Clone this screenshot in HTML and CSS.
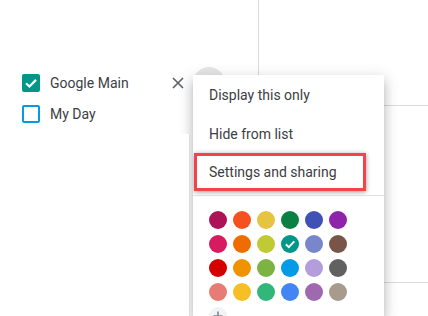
FILE: index.html
```html
<!DOCTYPE html>
<html>
<head>
<meta charset="utf-8">
<link rel="stylesheet" href="styles.css">
</head>
<body>
  <aside class="sidebar">
    <div class="cal-row">
      <span class="cb cb-checked">
        <svg width="18" height="18" viewBox="0 0 18 18"><polyline points="4,9.2 7.4,12.5 14,5.9" fill="none" stroke="#fff" stroke-width="2.2"/></svg>
      </span>
      <span class="cal-name">Google Main</span>
      <span class="x-btn">
        <svg width="12" height="12" viewBox="0 0 12 12"><path d="M1 1L11 11M11 1L1 11" stroke="#5f6368" stroke-width="1.7" fill="none"/></svg>
      </span>
      <span class="more-btn"></span>
    </div>
    <div class="cal-row">
      <span class="cb cb-empty"></span>
      <span class="cal-name">My Day</span>
    </div>
    <div class="lower-panel"></div>
  </aside>
  <main class="grid">
    <div class="grid-row top"></div>
    <div class="grid-row mid"></div>
    <div class="grid-row rest"></div>
  </main>

  <div class="menu">
    <div class="menu-item">Display this only</div>
    <div class="menu-item">Hide from list</div>
    <div class="menu-item highlight">Settings and sharing</div>
    <div class="divider"></div>
    <div class="palette">
      <span class="dot" style="background:#ad1457"></span>
      <span class="dot" style="background:#f4511e"></span>
      <span class="dot" style="background:#e4c441"></span>
      <span class="dot" style="background:#0b8043"></span>
      <span class="dot" style="background:#3f51b5"></span>
      <span class="dot" style="background:#8e24aa"></span>
      <span class="dot" style="background:#d81b60"></span>
      <span class="dot" style="background:#ef6c00"></span>
      <span class="dot" style="background:#c0ca33"></span>
      <span class="dot" style="background:#009688"><svg width="18" height="18" viewBox="0 0 18 18"><polyline points="4.8,9.2 7.8,12.1 13.3,6.4" fill="none" stroke="#fff" stroke-width="2"/></svg></span>
      <span class="dot" style="background:#7986cb"></span>
      <span class="dot" style="background:#795548"></span>
      <span class="dot" style="background:#d50000"></span>
      <span class="dot" style="background:#f09300"></span>
      <span class="dot" style="background:#7cb342"></span>
      <span class="dot" style="background:#039be5"></span>
      <span class="dot" style="background:#b39ddb"></span>
      <span class="dot" style="background:#616161"></span>
      <span class="dot" style="background:#e67c73"></span>
      <span class="dot" style="background:#f6bf26"></span>
      <span class="dot" style="background:#33b679"></span>
      <span class="dot" style="background:#4285f4"></span>
      <span class="dot" style="background:#9e69af"></span>
      <span class="dot" style="background:#a79b8e"></span>
      <span class="dot add"><svg width="18" height="18" viewBox="0 0 18 18"><path d="M9 4.5V13.5M4.5 9H13.5" stroke="#80868b" stroke-width="1.6"/></svg></span>
    </div>
  </div>
</body>
</html>
```

FILE: styles.css
```css
html, body {
  margin: 0;
  padding: 0;
}
body {
  width: 428px;
  height: 316px;
  overflow: hidden;
  display: flex;
  background: #fff;
  font-family: Roboto, "Noto Sans", Arial, sans-serif;
  color: #3c4043;
  position: relative;
}

.sidebar {
  width: 258px;
  flex: none;
  display: flex;
  flex-direction: column;
  padding-top: 67px;
  box-sizing: border-box;
}

.cal-row {
  width: 225px;
  height: 31px;
  display: flex;
  align-items: center;
  padding-left: 22px;
  box-sizing: border-box;
}

.cb {
  width: 18px;
  height: 18px;
  box-sizing: border-box;
  border-radius: 2px;
  flex: none;
  display: block;
}
.cb svg { display: block; }
.cb-checked { background: #009688; }
.cb-empty { border: 2px solid #039be5; }

.cal-name {
  margin-left: 10px;
  flex: 1;
  font-size: 14px;
  color: #3c4043;
}

.x-btn {
  width: 24px;
  height: 24px;
  display: flex;
  align-items: center;
  justify-content: center;
  flex: none;
}
.x-btn svg { display: block; }

.more-btn {
  width: 32px;
  height: 32px;
  border-radius: 50%;
  background: #e6e6e6;
  margin-left: 3px;
  flex: none;
}

.lower-panel {
  margin-top: 5px;
  width: 190px;
  flex: 1;
  background: #fff;
  border-right: 1px solid #dadce0;
  box-sizing: border-box;
  position: relative;
  z-index: 3;
}

.grid {
  flex: 1;
  display: flex;
  flex-direction: column;
  border-left: 1px solid #dadce0;
}
.grid-row.top {
  height: 105px;
  border-bottom: 1px solid #dadce0;
}
.grid-row.mid {
  height: 176px;
  border-bottom: 1px solid #dadce0;
}
.grid-row.rest { flex: 1; }

.menu {
  position: absolute;
  left: 193px;
  top: 75px;
  width: 191px;
  height: 241px;
  overflow: hidden;
  background: #fff;
  z-index: 2;
  box-shadow: 0 8px 10px 1px rgba(0,0,0,.14), 0 3px 14px 2px rgba(0,0,0,.12), 0 5px 5px -3px rgba(0,0,0,.2);
}

.menu-item {
  height: 39px;
  display: flex;
  align-items: center;
  padding-left: 16px;
  font-size: 14px;
  color: #3c4043;
  box-sizing: border-box;
}
.menu-item.highlight {
  height: 38px;
  margin-left: 1px;
  margin-right: 18px;
  padding-left: 12px;
  border: 3px solid #f2444a;
  box-shadow: 0 1px 5px rgba(0,0,0,.4);
}

.divider {
  height: 1px;
  background: #e0e0e0;
  margin-top: 4px;
}

.palette {
  display: grid;
  grid-template-columns: repeat(6, 18px);
  gap: 6px;
  padding: 15px 0 0 16px;
}
.dot {
  width: 18px;
  height: 18px;
  border-radius: 50%;
  display: block;
}
.dot svg { display: block; }
.dot.add { background: #f1f3f4; }
```
